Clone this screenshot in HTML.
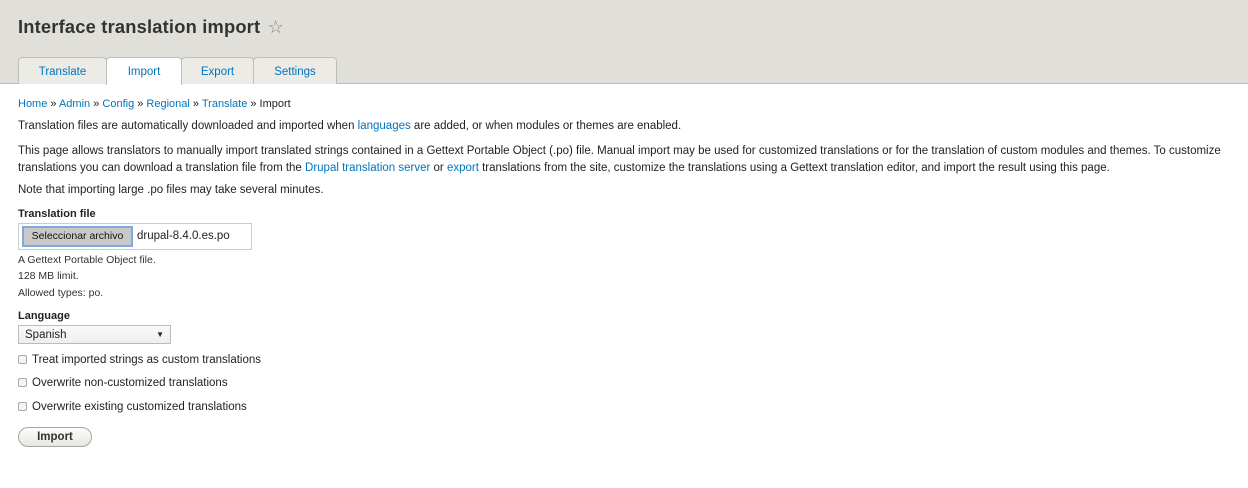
<!DOCTYPE html>
<html><head><style>
*{margin:0;padding:0;box-sizing:border-box}
body{width:1248px;height:488px;background:#fff;font-family:"Liberation Sans",sans-serif;font-size:11.5px;color:#222;position:relative;overflow:hidden}
.hdr{position:absolute;left:0;top:0;width:1248px;height:84px;background:#e0dfd9;border-bottom:1px solid #bfbfba}
h1{position:absolute;left:18px;top:16px;font-size:18.3px;font-weight:bold;color:#333;letter-spacing:.2px}
h1 span{font-weight:normal;color:#888;font-size:18px;margin-left:2px}
.tab{position:absolute;top:57px;height:27px;background:#ecebe6;border:1px solid #bfbfba;border-bottom:none;border-radius:4px 4px 0 0;color:#0074bd;font-size:11.5px;text-align:center;line-height:28px}
.tab.a{background:#fff;height:28px}
a{color:#0074bd;text-decoration:none}
.t{position:absolute;left:18px;white-space:nowrap}
.lbl{font-weight:bold;font-size:11px}
.desc{font-size:10.5px;color:#333}
.cb{display:inline-block;width:9px;height:9px;border:1px solid #aaa;border-radius:2px;background:#f4f4f4;vertical-align:-1px;margin-right:5px}
</style></head><body>
<div class="hdr">
<h1>Interface translation import <span>☆</span></h1>
<div class="tab" style="left:18px;width:89px">Translate</div>
<div class="tab a" style="left:106px;width:76px">Import</div>
<div class="tab" style="left:181px;width:73px">Export</div>
<div class="tab" style="left:253px;width:84px">Settings</div>
</div>
<div class="t" style="top:98px;font-size:11px"><a>Home</a> » <a>Admin</a> » <a>Config</a> » <a>Regional</a> » <a>Translate</a> » Import</div>
<div class="t" style="top:120px">Translation files are automatically downloaded and imported when <a>languages</a> are added, or when modules or themes are enabled.</div>
<div class="t" style="top:143px;line-height:16.5px">This page allows translators to manually import translated strings contained in a Gettext Portable Object (.po) file. Manual import may be used for customized translations or for the translation of custom modules and themes. To customize<br>translations you can download a translation file from the <a>Drupal translation server</a> or <a>export</a> translations from the site, customize the translations using a Gettext translation editor, and import the result using this page.</div>
<div class="t" style="top:184px">Note that importing large .po files may take several minutes.</div>
<div class="t lbl" style="top:208px">Translation file</div>
<div style="position:absolute;left:18px;top:223px;width:234px;height:27px;border:1px solid #ccc;background:#fff"></div>
<div style="position:absolute;left:22px;top:226px;width:111px;height:21px;background:#c9c9c9;border:2px solid #7fa9e0;font-size:10.5px;line-height:17px;text-align:center;color:#111">Seleccionar archivo</div>
<div style="position:absolute;left:137px;top:230px;font-size:11.5px">drupal-8.4.0.es.po</div>
<div class="t desc" style="top:254px">A Gettext Portable Object file.</div>
<div class="t desc" style="top:270px">128 MB limit.</div>
<div class="t desc" style="top:287px">Allowed types: po.</div>
<div class="t lbl" style="top:310px">Language</div>
<div style="position:absolute;left:18px;top:325px;width:153px;height:19px;border:1px solid #bbb;background:linear-gradient(#fafafa,#eee);font-size:11.5px;line-height:18px;padding-left:6px">Spanish<span style="position:absolute;right:6px;top:0;font-size:8px">▼</span></div>
<div class="t" style="top:354px"><span class="cb"></span>Treat imported strings as custom translations</div>
<div class="t" style="top:377px"><span class="cb"></span>Overwrite non-customized translations</div>
<div class="t" style="top:401px"><span class="cb"></span>Overwrite existing customized translations</div>
<div style="position:absolute;left:18px;top:427px;width:74px;height:20px;border:1px solid #a6a6a6;border-radius:10px;background:linear-gradient(#fcfcfa,#e6e6e2);font-weight:bold;text-align:center;line-height:19px;color:#333">Import</div>
</body></html>
